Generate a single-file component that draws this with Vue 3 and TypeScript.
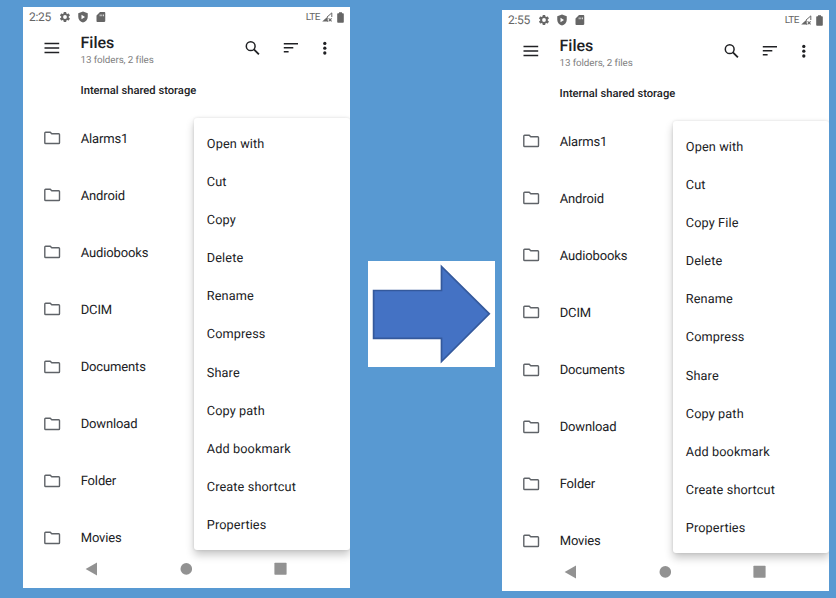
<script setup lang="ts">
interface Screen {
  time: string
  actions: string[]
}

const folders: string[] = ['Alarms1', 'Android', 'Audiobooks', 'DCIM', 'Documents', 'Download', 'Folder', 'Movies']

function menuWith(copyLabel: string): string[] {
  return ['Open with', 'Cut', copyLabel, 'Delete', 'Rename', 'Compress', 'Share', 'Copy path', 'Add bookmark', 'Create shortcut', 'Properties']
}

const screens: Screen[] = [
  { time: '2:25', actions: menuWith('Copy') },
  { time: '2:55', actions: menuWith('Copy File') },
]
</script>

<template>
  <main class="board">
    <template v-for="(screen, index) in screens" :key="screen.time">
      <div v-if="index === 1" class="arrow-card">
        <svg width="127" height="106" viewBox="0 0 127 106">
          <path d="M5.600 29.500H73.500V5.500L121.300 52.800 73.500 100.500V77.300H5.600Z" fill="#4472c4" stroke="#34599c" stroke-width="1.700" />
        </svg>
      </div>
      <section class="phone">
        <div class="status">
          <span class="time">{{ screen.time }}</span>
          <svg class="gear" width="12" height="12" viewBox="0 0 24 24">
            <path fill-rule="evenodd" d="M19.4 13a7.500 7.500 0 0 0 0-2l2.100-1.700a.5.5 0 0 0 .1-.6l-2-3.500a.5.5 0 0 0-.6-.2l-2.500 1a7.300 7.300 0 0 0-1.700-1L14.400 2.400a.5.5 0 0 0-.5-.4h-4a.5.5 0 0 0-.5.4L9 5a7.700 7.700 0 0 0-1.700 1l-2.500-1a.5.5 0 0 0-.6.2l-2 3.500a.5.5 0 0 0 .1.600L4.500 11a8 8 0 0 0 0 2l-2.200 1.700a.5.5 0 0 0-.1.600l2 3.500c.1.200.4.300.6.200l2.500-1a7.300 7.300 0 0 0 1.700 1l.4 2.600c0 .2.200.4.5.4h4c.3 0 .5-.2.5-.4l.4-2.600a7.700 7.700 0 0 0 1.700-1l2.500 1c.2.1.5 0 .6-.2l2-3.500a.5.5 0 0 0-.1-.6zM12 15.800a3.800 3.800 0 1 1 0-7.600 3.800 3.800 0 0 1 0 7.600z" />
          </svg>
          <svg class="shield" width="12" height="12" viewBox="0 0 24 24">
            <path fill-rule="evenodd" d="M12 1 2.500 4.500v7C2.500 17 6.500 21.700 12 23c5.500-1.300 9.500-6 9.500-11.500v-7zM9 7.500l7 4.500-7 4.500z" />
          </svg>
          <svg class="card" width="12" height="12" viewBox="0 0 24 24">
            <path fill-rule="evenodd" d="M18.500 2H10L3 9v11.500c0 1 .8 1.500 1.500 1.500h14c1 0 2-.8 2-1.800V4c0-1.200-.9-2-2-2zM9.500 7H11v3.500H9.500zM13 7h1.500v3.500H13zM16.500 7H18v3.500h-1.500z" />
          </svg>
          <span class="lte">LTE</span>
          <svg class="signal" width="11" height="10" viewBox="0 0 11 10">
            <path d="M.2 9.600 5.700 4.500V9.600z" />
            <path d="M5 5.100 9.800.9V5M5 9.100h1" fill="none" stroke="#666" stroke-width="1" />
            <path d="m6.600 6.300 3 3m0-3-3 3" stroke="#666" stroke-width="1.100" />
          </svg>
          <svg class="battery" width="7" height="11" viewBox="0 0 7 11">
            <path d="M2 .3h3v1h1q.8 0 .8.800v7.800q0 .8-.8.800H1q-.8 0-.8-.8V2.100q0-.8.8-.8h1z" />
          </svg>
        </div>

        <header class="toolbar">
          <svg class="hamburger" width="16" height="12" viewBox="0 0 16 12">
            <path d="M.5 1.500h14.700M.5 6h14.700M.5 10.500h14.700" stroke="#202124" stroke-width="1.300" />
          </svg>
          <div class="heading">
            <h1>Files</h1>
            <p>13 folders, 2 files</p>
          </div>
          <svg class="search" width="16" height="16" viewBox="0 0 16 16" fill="none" stroke="#202124" stroke-width="1.500">
            <circle cx="5.700" cy="6.200" r="4.400" />
            <path d="m8.900 9.400 5 5" stroke-width="1.800" />
          </svg>
          <svg class="sort" width="16" height="12" viewBox="0 0 16 12">
            <path d="M.8 1.800h14.200M.8 5.800h9.500M.8 9.800h4.800" stroke="#202124" stroke-width="1.500" />
          </svg>
          <svg class="more" width="4" height="14" viewBox="0 0 4 14" fill="#202124">
            <circle cx="1.800" cy="2.400" r="1.650" />
            <circle cx="1.800" cy="7.200" r="1.650" />
            <circle cx="1.800" cy="12" r="1.650" />
          </svg>
        </header>

        <h2>Internal shared storage</h2>

        <ul class="folders">
          <li v-for="name in folders" :key="name">
            <svg width="17" height="14" viewBox="0 0 17 14">
              <path d="M1.600 1.200h4.600l1.600 1.600h6.900q.8 0 .8.800v8.100q0 .8-.8.800H1.600q-.8 0-.8-.8V2q0-.8.8-.8z" fill="none" stroke="#5f6368" stroke-width="1.400" />
            </svg>
            <span>{{ name }}</span>
          </li>
        </ul>

        <nav class="system-nav">
          <svg width="12" height="14" viewBox="0 0 12 14"><path d="M.6 7 12 .6v12.800z" /></svg>
          <svg width="12" height="14" viewBox="0 0 12 14"><circle cx="6.300" cy="6.900" r="5.800" /></svg>
          <svg width="13" height="14" viewBox="0 0 13 14"><rect x=".4" y=".8" width="12.200" height="12" rx=".7" /></svg>
        </nav>

        <ul class="menu">
          <li v-for="action in screen.actions" :key="action">{{ action }}</li>
        </ul>
      </section>
    </template>
  </main>
</template>

<style>
body {
  background: #5899d2;
}
</style>

<style scoped>
.board {
  box-sizing: border-box;
  display: flex;
  align-items: flex-start;
  width: 836px;
  height: 598px;
  padding: 7px 7px 0 23px;
  overflow: hidden;
  background: #5899d2;
  font-family: Roboto, "Liberation Sans", sans-serif;
  color: #202124;
  text-rendering: geometricPrecision;
}

svg {
  display: block;
  flex: none;
}

h1,
h2,
p,
ul {
  margin: 0;
  padding: 0;
  list-style: none;
}

.phone {
  position: relative;
  width: 327px;
  height: 581px;
  flex: none;
  overflow: hidden;
  background: #fff;
}

.arrow-card {
  width: 127px;
  height: 106px;
  margin: 254px 7px 0 18px;
  flex: none;
  background: #fff;
}

.arrow-card svg {
  filter: blur(0.7px);
}

.arrow-card + .phone {
  margin-top: 3px;
}

.status {
  display: flex;
  align-items: center;
  height: 20px;
  padding: 0 6px;
  color: #666;
  fill: #666;
}

.time {
  width: 30px;
  font-size: 12px;
  line-height: 20px;
  letter-spacing: -0.3px;
}

.shield {
  margin-left: 6px;
}

.card {
  margin-left: 6px;
}

.lte {
  margin-left: auto;
  font-size: 10px;
  letter-spacing: -0.5px;
}

.signal {
  margin: 0 4px 0 2px;
}

.toolbar {
  display: flex;
  align-items: center;
  height: 42px;
  padding-left: 21px;
}

.heading {
  width: 164px;
  margin-left: 20.500px;
  padding-top: 5px;
}

h1 {
  font-size: 16px;
  line-height: 18px;
  font-weight: 500;
  letter-spacing: 0;
}

p {
  padding-top: 2px;
  font-size: 9.800px;
  line-height: 14px;
  letter-spacing: -0.080px;
  color: #808080;
}

.sort {
  margin-left: 22px;
}

.more {
  margin-left: 24px;
}

h2 {
  height: 41px;
  padding-left: 57.500px;
  font-size: 11.200px;
  line-height: 43px;
  font-weight: 500;
}

.folders {
  padding-top: 1px;
}

.folders li {
  display: flex;
  align-items: center;
  height: 57.140px;
  padding-left: 20.700px;
  font-size: 13px;
}

.folders svg {
  margin-top: -3px;
}

.folders span {
  margin-top: -1px;
  margin-left: 20px;
  letter-spacing: -0.140px;
}

.system-nav {
  display: flex;
  justify-content: space-between;
  margin-top: -6px;
  padding: 0 63px 0 62px;
  fill: #929292;
}

.menu {
  position: absolute;
  top: 111px;
  left: 171px;
  box-sizing: border-box;
  width: 156px;
  height: 431.500px;
  padding: 8px 0 0 12.800px;
  border-radius: 3px;
  background: #fff;
  box-shadow: 0 5px 8px rgba(0, 0, 0, 0.22), 0 0 3px rgba(0, 0, 0, 0.12);
}

.menu li {
  height: 38.100px;
  font-size: 12.700px;
  line-height: 38px;
  letter-spacing: 0.120px;
}
</style>
